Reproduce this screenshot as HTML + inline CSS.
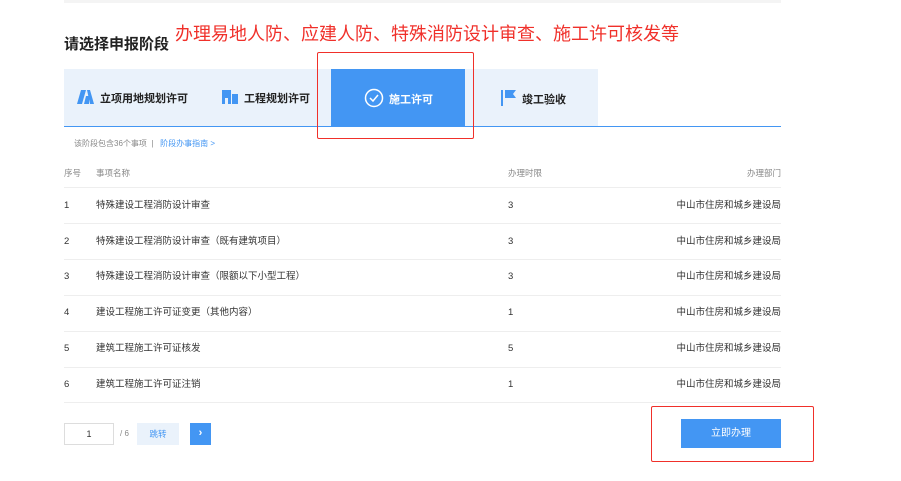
<!DOCTYPE html>
<html><head><meta charset="utf-8"><style>
*{margin:0;padding:0;box-sizing:border-box}
body{width:901px;height:481px;background:#fff;position:relative;overflow:hidden;font-family:"Liberation Sans","Noto Sans CJK SC",sans-serif;color:#333}
.a{position:absolute;white-space:nowrap}
.sep{position:absolute;left:64px;width:717px;height:1px;background:#eeeeee}
.r{font-size:9.5px;color:#333;line-height:14px;height:14px}
.h{font-size:8.5px;color:#888;line-height:12px}
</style></head><body>
<div class="a" style="left:64px;top:0;width:717px;height:3px;background:#f4f4f4"></div>
<div class="a" style="left:64px;top:33px;font-size:15px;font-weight:bold;color:#222">请选择申报阶段</div>
<div class="a" style="left:175px;top:20px;font-size:18px;color:#f0302a">办理易地人防、应建人防、特殊消防设计审查、施工许可核发等</div>

<div class="a" style="left:64px;top:69px;width:534px;height:57px;background:#eaf2fb"></div>
<div class="a" style="left:331px;top:69px;width:134px;height:57px;background:#4396f3"></div>
<div class="a" style="left:64px;top:126px;width:717px;height:1px;background:#4396f3"></div>

<svg class="a" style="left:77px;top:90px" width="17" height="14"><path d="M4 0h5l-4 14H0z M10 0h3l4 14h-4z M9 6h3v8H7z" fill="#4396f3"/></svg>
<div class="a" style="left:100px;top:90px;font-size:11px;font-weight:bold;color:#222">立项用地规划许可</div>
<svg class="a" style="left:222px;top:90px" width="16" height="14"><path d="M0 0h9v14H6V8H3v6H0z M10 4h6v10h-6z" fill="#4396f3"/></svg>
<div class="a" style="left:244px;top:90px;font-size:11px;font-weight:bold;color:#222">工程规划许可</div>
<svg class="a" style="left:364px;top:88px" width="20" height="20"><circle cx="10" cy="10" r="8.5" fill="none" stroke="#fff" stroke-width="1.5"/><path d="M6 10l3 3 5-6" fill="none" stroke="#fff" stroke-width="1.5"/></svg>
<div class="a" style="left:389px;top:91px;font-size:11px;font-weight:bold;color:#fff">施工许可</div>
<svg class="a" style="left:501px;top:90px" width="15" height="16"><rect x="0" y="0" width="2" height="16" fill="#4396f3"/><path d="M4 0h11l-3 4 3 4H4z" fill="#4396f3"/></svg>
<div class="a" style="left:522px;top:91px;font-size:11px;font-weight:bold;color:#222">竣工验收</div>

<div class="a" style="left:317px;top:52px;width:157px;height:87px;border:1.5px solid #f0302a;border-radius:2px"></div>

<div class="a" style="left:74px;top:138px;font-size:8px;color:#888">该阶段包含36个事项 &nbsp;|&nbsp;&nbsp; <span style="color:#4396f3">阶段办事指南 &gt;</span></div>

<div class="a h" style="left:64px;top:167px">序号</div>
<div class="a h" style="left:96px;top:167px">事项名称</div>
<div class="a h" style="left:508px;top:167px">办理时限</div>
<div class="a h" style="left:733px;top:167px;width:48px;text-align:right">办理部门</div>
<div class="sep" style="top:187px"></div>

<div class="a r" style="left:64px;top:199px">1</div><div class="a r" style="left:96px;top:199px">特殊建设工程消防设计审查</div><div class="a r" style="left:508px;top:199px">3</div><div class="a r" style="left:661px;top:199px;width:120px;text-align:right">中山市住房和城乡建设局</div>
<div class="sep" style="top:223px"></div>
<div class="a r" style="left:64px;top:235px">2</div><div class="a r" style="left:96px;top:235px">特殊建设工程消防设计审查（既有建筑项目）</div><div class="a r" style="left:508px;top:235px">3</div><div class="a r" style="left:661px;top:235px;width:120px;text-align:right">中山市住房和城乡建设局</div>
<div class="sep" style="top:259px"></div>
<div class="a r" style="left:64px;top:270px">3</div><div class="a r" style="left:96px;top:270px">特殊建设工程消防设计审查（限额以下小型工程）</div><div class="a r" style="left:508px;top:270px">3</div><div class="a r" style="left:661px;top:270px;width:120px;text-align:right">中山市住房和城乡建设局</div>
<div class="sep" style="top:295px"></div>
<div class="a r" style="left:64px;top:306px">4</div><div class="a r" style="left:96px;top:306px">建设工程施工许可证变更（其他内容）</div><div class="a r" style="left:508px;top:306px">1</div><div class="a r" style="left:661px;top:306px;width:120px;text-align:right">中山市住房和城乡建设局</div>
<div class="sep" style="top:331px"></div>
<div class="a r" style="left:64px;top:342px">5</div><div class="a r" style="left:96px;top:342px">建筑工程施工许可证核发</div><div class="a r" style="left:508px;top:342px">5</div><div class="a r" style="left:661px;top:342px;width:120px;text-align:right">中山市住房和城乡建设局</div>
<div class="sep" style="top:367px"></div>
<div class="a r" style="left:64px;top:378px">6</div><div class="a r" style="left:96px;top:378px">建筑工程施工许可证注销</div><div class="a r" style="left:508px;top:378px">1</div><div class="a r" style="left:661px;top:378px;width:120px;text-align:right">中山市住房和城乡建设局</div>
<div class="sep" style="top:402px"></div>

<div class="a" style="left:64px;top:423px;width:50px;height:22px;border:1px solid #ddd;font-size:9px;text-align:center;line-height:20px">1</div>
<div class="a" style="left:120px;top:429px;font-size:8px;color:#888;line-height:10px">/ 6</div>
<div class="a" style="left:137px;top:423px;width:42px;height:22px;background:#eaf2fb;font-size:8.5px;color:#4396f3;text-align:center;line-height:22px">跳转</div>
<div class="a" style="left:190px;top:423px;width:21px;height:22px;background:#4396f3;color:#fff;font-size:11px;text-align:center;line-height:21px;font-weight:bold">›</div>

<div class="a" style="left:681px;top:419px;width:100px;height:29px;background:#4396f3;color:#fff;font-size:10px;text-align:center;line-height:29px">立即办理</div>
<div class="a" style="left:651px;top:406px;width:163px;height:56px;border:1.5px solid #f0302a;border-radius:2px"></div>
</body></html>
